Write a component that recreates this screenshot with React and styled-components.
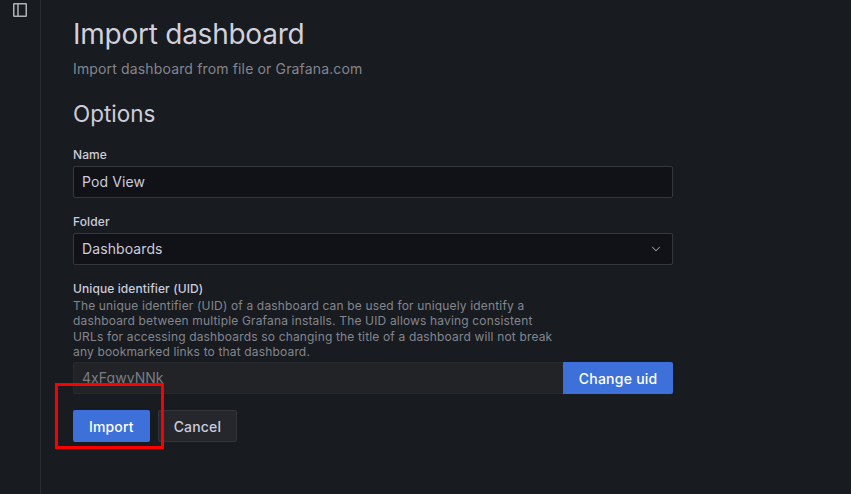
import React from "react";
import styled, { createGlobalStyle } from "styled-components";
import { ChevronDown } from "lucide-react";

const GlobalStyle = createGlobalStyle`
  html, body {
    margin: 0;
    height: 100%;
    background: #181b1f;
    overflow: hidden;
  }
  body {
    font-family: Inter, "Liberation Sans", sans-serif;
    color: #ccccdc;
  }
`;

const Page = styled.div`
  position: relative;
  display: flex;
  width: 851px;
  height: 494px;
  overflow: hidden;
`;

const Sidebar = styled.aside`
  flex: 0 0 41px;
  box-sizing: border-box;
  display: flex;
  justify-content: center;
  align-items: flex-start;
  padding: 2px 1px 0 0;
  border-right: 1px solid #2a2d32;
  color: #b0b1b8;
`;

const Content = styled.main`
  width: 600px;
  padding: 16px 0 0 32px;
`;

const Title = styled.h1`
  margin: 0;
  font-size: 28px;
  font-weight: 400;
  line-height: 36px;
  letter-spacing: -0.25px;
  color: #d0d1dc;
`;

const Subtitle = styled.p`
  margin: 8px 0 0;
  font-size: 14px;
  line-height: 18px;
  letter-spacing: 0.15px;
  color: #84868f;
`;

const Heading = styled.h2`
  margin: 20px 0 0;
  font-size: 22.5px;
  font-weight: 400;
  line-height: 32px;
  color: #ccccdc;
`;

const Field = styled.div`
  margin-top: ${(p) => p.$top}px;
`;

const Label = styled.label`
  display: block;
  font-size: 12px;
  font-weight: 500;
  line-height: 15px;
  letter-spacing: 0.1px;
  margin-bottom: ${(p) => p.$gap ?? 4}px;
  color: #ccccdc;
`;

const Help = styled.p`
  margin: 0 0 3px;
  width: 490px;
  font-size: 12px;
  line-height: 15.25px;
  letter-spacing: 0.16px;
  color: #84868f;
`;

const Control = styled.div`
  box-sizing: border-box;
  display: flex;
  align-items: center;
  justify-content: space-between;
  width: 600px;
  height: 32px;
  padding: 0 8px 2px;
  font-size: 14px;
  letter-spacing: 0.1px;
  color: #ccccdc;
  background: #111217;
  border: 1px solid #35373c;
  border-radius: 2px;
`;

const Chevron = styled(ChevronDown)`
  margin: 2px 1px 0 0;
`;

const UidRow = styled.div`
  display: flex;
  width: 600px;
  height: 32px;
`;

const UidValue = styled.div`
  box-sizing: border-box;
  flex: 1;
  display: flex;
  align-items: center;
  padding: 0 8px 2px;
  font-size: 14px;
  letter-spacing: 0.05px;
  color: #7a7c83;
  background: #212327;
  border: 1px solid #26292e;
  border-right: none;
  border-radius: 2px 0 0 2px;
`;

const Button = styled.button`
  box-sizing: border-box;
  height: 32px;
  padding: 0 ${(p) => (p.$secondary ? 15 : 16)}px;
  font-family: inherit;
  font-size: 14px;
  font-weight: 500;
  letter-spacing: 0.15px;
  color: ${(p) => (p.$secondary ? "#ccccdc" : "#ffffff")};
  background: ${(p) => (p.$secondary ? "#25272c" : "#3d71d9")};
  border: ${(p) => (p.$secondary ? "1px solid #33353a" : "none")};
  border-radius: 2px;
`;

const ChangeButton = styled(Button)`
  padding: 0 15.5px;
  letter-spacing: 0.25px;
  border-radius: 0 2px 2px 0;
`;

const Actions = styled.div`
  display: flex;
  gap: 8px;
  margin-top: 16px;
`;

const Highlight = styled.div`
  position: absolute;
  left: 55px;
  top: 383px;
  width: 109px;
  height: 66px;
  box-sizing: border-box;
  border: 3px solid #fa0000;
  pointer-events: none;
`;

const PanelIcon = () => (
  <svg width="16" height="16" viewBox="0 0 16 16" fill="none" stroke="currentColor" strokeWidth="1.5">
    <rect x="1.75" y="1.75" width="12.5" height="12.5" rx="0.5" />
    <path d="M6 1.75v12.5" />
  </svg>
);

const App = () => {
  return (
    <Page>
      <GlobalStyle />
      <Sidebar>
        <PanelIcon />
      </Sidebar>
      <Content>
        <Title>Import dashboard</Title>
        <Subtitle>Import dashboard from file or Grafana.com</Subtitle>
        <Heading>Options</Heading>
        <Field $top={17}>
          <Label>Name</Label>
          <Control>Pod View</Control>
        </Field>
        <Field $top={16}>
          <Label>Folder</Label>
          <Control>
            Dashboards
            <Chevron size={14} strokeWidth={1.8} color="#9b9ca5" />
          </Control>
        </Field>
        <Field $top={16}>
          <Label $gap={2}>Unique identifier (UID)</Label>
          <Help>
            The unique identifier (UID) of a dashboard can be used for uniquely identify a dashboard between
            multiple Grafana installs. The UID allows having consistent URLs for accessing dashboards so changing
            the title of a dashboard will not break any bookmarked links to that dashboard.
          </Help>
          <UidRow>
            <UidValue>4xFgwvNNk</UidValue>
            <ChangeButton>Change uid</ChangeButton>
          </UidRow>
        </Field>
        <Actions>
          <Button>Import</Button>
          <Button $secondary>Cancel</Button>
        </Actions>
      </Content>
      <Highlight />
    </Page>
  );
};

export default App;
